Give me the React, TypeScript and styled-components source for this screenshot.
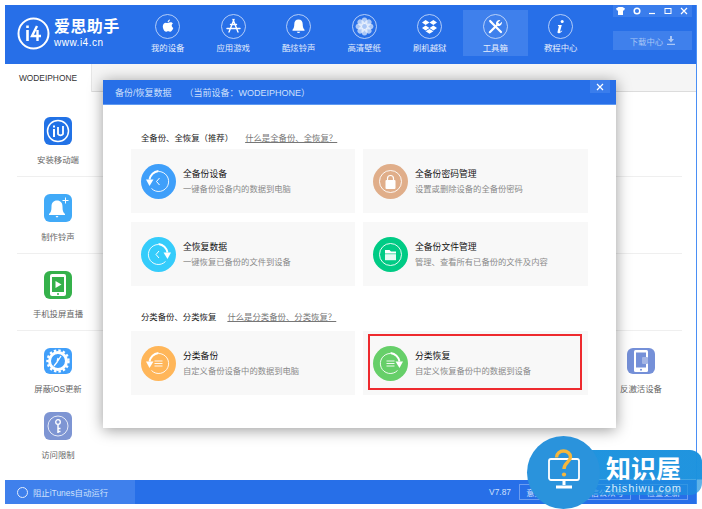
import React from 'react';
import styled, { createGlobalStyle } from 'styled-components';

const GlobalStyle = createGlobalStyle`
  html, body {
    margin: 0;
    padding: 0;
    background: #fff;
    font-family: "Liberation Sans", "Noto Sans CJK SC", sans-serif;
  }
  * { box-sizing: border-box; }
`;

const Page = styled.div`
  position: relative;
  width: 702px;
  height: 509px;
  padding: 5px;
  overflow: hidden;
`;

const Window = styled.div`
  position: relative;
  display: flex;
  flex-direction: column;
  height: 100%;
  border-right: 1px solid #4a8ff5;
`;

const Header = styled.header`
  display: flex;
  flex: none;
  height: 59px;
  background: #276fe8;
  color: #fff;
`;

const Logo = styled.div`
  display: flex;
  width: 130px;
  padding: 12px 0 0 12px;
  gap: 4px;
`;

const LogoText = styled.div`
  display: flex;
  flex-direction: column;
  h1 {
    margin: 0;
    font-size: 16px;
    line-height: 20px;
    font-weight: 700;
    letter-spacing: 0.4px;
  }
  span {
    font-size: 10px;
    line-height: 11px;
    letter-spacing: 0.5px;
  }
`;

const Nav = styled.nav`
  display: flex;
  align-items: flex-start;
`;

const NavItem = styled.div<{ $active?: boolean }>`
  display: flex;
  flex-direction: column;
  align-items: center;
  width: 65.5px;
  height: 46px;
  margin-top: 5px;
  padding-top: 4px;
  font-size: 8.4px;
  line-height: 12px;
  gap: 3px;
  color: #e4edfc;
  background: ${({ $active }) => ($active ? '#3f80ec' : 'transparent')};
`;

const WindowTools = styled.div`
  position: absolute;
  top: 0;
  right: 4px;
  width: 79px;
  display: flex;
  flex-direction: column;
  gap: 14px;
`;

const ControlRow = styled.div`
  display: flex;
  height: 12px;
  background: #3a7dec;
`;

const Control = styled.span`
  display: flex;
  align-items: center;
  justify-content: center;
  flex: 1;
`;

const DownloadButton = styled.div`
  display: flex;
  align-items: center;
  justify-content: center;
  height: 19px;
  gap: 4px;
  font-size: 8.4px;
  color: #a9c6f6;
  background: #3f80ec;
`;

const TabStrip = styled.div`
  display: flex;
  flex: none;
  height: 28px;
  background: #f5f5f5;
  border-bottom: 1px solid #dcdcdc;
`;

const Tab = styled.div`
  display: flex;
  align-items: center;
  justify-content: center;
  width: 87px;
  height: 28px;
  font-size: 8.4px;
  color: #333;
  background: #fff;
  border-right: 1px solid #e6e6e6;
`;

const Content = styled.main`
  flex: 1;
  padding: 8px 14px 0 12px;
  background: #fff;
`;

const ToolRow = styled.div<{ $plain?: boolean; $compact?: boolean }>`
  display: flex;
  justify-content: space-between;
  height: ${({ $compact }) => ($compact ? '64px' : '77px')};
  padding-top: 17px;
  border-bottom: ${({ $plain }) => ($plain ? 'none' : '1px solid #efefef')};
`;

const Tool = styled.div`
  display: flex;
  flex-direction: column;
  align-items: center;
  width: 82px;
  gap: 9px;
  font-size: 8.4px;
  line-height: 12px;
  color: #666;
`;

const ToolIcon = styled.div<{ $color: string }>`
  display: flex;
  align-items: center;
  justify-content: center;
  width: 28px;
  height: 28px;
  border-radius: 6px;
  background: ${({ $color }) => $color};
`;

const Footer = styled.footer`
  display: flex;
  flex: none;
  align-items: center;
  height: 24px;
  background: #276fe8;
  color: #cfe0fb;
  font-size: 8.4px;
`;

const ITunesToggle = styled.div`
  display: flex;
  align-items: center;
  width: 130px;
  height: 100%;
  gap: 5px;
  padding-left: 12px;
  background: #3f80ec;
`;

const Radio = styled.span`
  width: 11px;
  height: 11px;
  border-radius: 50%;
  border: 1px solid #e4edfc;
`;

const FooterRight = styled.div`
  display: flex;
  align-items: center;
  margin-left: auto;
  gap: 8px;
  padding-right: 8px;
`;

const FooterButton = styled.span<{ $width: number }>`
  display: flex;
  align-items: center;
  justify-content: center;
  width: ${({ $width }) => $width}px;
  height: 16px;
  border: 1px solid #6c9df0;
`;

const Modal = styled.section`
  position: absolute;
  left: 98px;
  top: 75px;
  width: 513px;
  height: 348px;
  background: #fff;
  box-shadow: 0 2px 14px rgba(0, 0, 0, 0.4);
`;

const ModalTitle = styled.div`
  position: relative;
  display: flex;
  align-items: center;
  height: 25px;
  padding-left: 12px;
  gap: 13px;
  font-size: 9px;
  color: #cfe0fb;
  background: #276fe8;
  border-bottom: 1px solid #5f9af2;
`;

const ModalClose = styled.span`
  position: absolute;
  top: 0;
  right: 6px;
  display: flex;
  align-items: center;
  justify-content: center;
  width: 20px;
  height: 13px;
  background: #3a7dec;
`;

const ModalBody = styled.div`
  padding: 25px 28px 0;
`;

const SectionHead = styled.div<{ $gap: number; $after: number }>`
  display: flex;
  align-items: center;
  height: 14px;
  padding-left: 10px;
  gap: ${({ $gap }) => $gap}px;
  font-size: 8.4px;
  color: #222;
  margin-bottom: ${({ $after }) => $after}px;
  a {
    color: #777;
    text-decoration: underline;
  }
`;

const CardGrid = styled.div`
  display: grid;
  grid-template-columns: 224px 225px;
  grid-auto-rows: 64px;
  gap: 9px 8px;
  margin-bottom: 23px;
`;

const Card = styled.div`
  position: relative;
  display: flex;
  align-items: center;
  padding-left: 10px;
  gap: 7px;
  background: #f8f8f8;
`;

const CardText = styled.div`
  display: flex;
  flex-direction: column;
  gap: 3px;
  strong {
    font-size: 8.8px;
    line-height: 12px;
    font-weight: 400;
    color: #111;
  }
  span {
    font-size: 8.3px;
    line-height: 12px;
    color: #8a8a8a;
  }
`;

const Highlight = styled.div`
  position: absolute;
  left: 5px;
  top: 3px;
  width: 214px;
  height: 56px;
  border: 2px solid #ee2a2e;
`;

const Watermark = styled.div`
  position: absolute;
  left: 527px;
  top: 436px;
  width: 175px;
  height: 73px;
`;

const WatermarkBar = styled.div`
  position: absolute;
  left: 30px;
  top: 14px;
  width: 145px;
  height: 45px;
  border-radius: 0 12px 12px 0;
  background: linear-gradient(rgba(28, 146, 222, 0.98) 65%, rgba(28, 146, 222, 0.7) 66%);
`;

const WatermarkDisc = styled.div`
  position: absolute;
  left: 0;
  top: 0;
  width: 73px;
  height: 73px;
  padding-bottom: 7px;
  border-radius: 50%;
  background: #2a93dc;
  display: flex;
  align-items: center;
  justify-content: center;
`;

const WatermarkText = styled.div`
  position: absolute;
  left: 77px;
  top: 20px;
  width: 79px;
  color: #fff;
  text-align: center;
  b {
    display: block;
    font-size: 25px;
    line-height: 26px;
    white-space: nowrap;
  }
  span {
    display: block;
    font-size: 11px;
    line-height: 12px;
    letter-spacing: 0.9px;
    white-space: nowrap;
    color: #d7ecfa;
  }
`;

const Ring = ({ children }: { children: React.ReactNode }) => (
  <svg width="25" height="25" viewBox="0 0 25 25" fill="none">
    <circle cx="12.5" cy="12.5" r="12" stroke="#d5e3fb" strokeWidth="0.8" />
    {children}
  </svg>
);

const navItems: { label: string; active?: boolean; icon: React.ReactNode }[] = [
  {
    label: '我的设备',
    icon: (
      <Ring>
        <path d="M12.6 9c1-.1 1.9-.7 2.9-.7 1 0 1.9.5 2.4 1.3-1.8 1-1.5 3.7.4 4.5-.5 1.4-1.6 3.6-2.9 3.6-.8 0-1.2-.5-2.2-.5s-1.5.5-2.2.5c-1.6 0-3.2-3-3.2-5.2 0-2.4 1.5-3.8 3-3.8.8 0 1.4.3 2 .3z" fill="#fff" />
        <path d="M12.6 8.3c0-1.4 1-2.5 2.3-2.7.1 1.4-1 2.6-2.3 2.7z" fill="#fff" />
      </Ring>
    ),
  },
  {
    label: '应用游戏',
    icon: (
      <Ring>
        <path d="M13 5.5 8 18M12 5.5 17 18M6 14.5h13M9.5 10.5l6 0" stroke="#fff" strokeWidth="1.4" strokeLinecap="round" />
      </Ring>
    ),
  },
  {
    label: '酷炫铃声',
    icon: (
      <Ring>
        <path d="M12.5 5.5c-2.8 0-4.2 2-4.2 4.6 0 3-.6 4.4-1.8 5.7v1h12v-1c-1.2-1.3-1.8-2.7-1.8-5.7 0-2.6-1.4-4.6-4.2-4.6z" fill="#fff" />
        <path d="M10.8 17.8a1.8 1.8 0 0 0 3.4 0z" fill="#fff" />
      </Ring>
    ),
  },
  {
    label: '高清壁纸',
    icon: (
      <Ring>
        {[0, 45, 90, 135, 180, 225, 270, 315].map((a) => (
          <ellipse key={a} cx="12.5" cy="7.8" rx="3" ry="4.2" fill="#fff" opacity="0.62" transform={`rotate(${a} 12.5 12.5)`} />
        ))}
        <circle cx="12.5" cy="12.5" r="2.4" fill="#a9c6f6" />
      </Ring>
    ),
  },
  {
    label: '刷机越狱',
    icon: (
      <Ring>
        <path d="m8.6 6 3.9 2.5L8.6 11 5 8.5zM16.4 6 20 8.5 16.4 11l-3.9-2.5zM8.6 11.6l3.9 2.5 3.9-2.5 3.6 2.4-3.6 2.4-3.9-2.4-3.9 2.4L5 14z" fill="#fff" />
        <path d="m8.6 17.2 3.9-2.3 3.9 2.3-3.9 2.5z" fill="#fff" />
      </Ring>
    ),
  },
  {
    label: '工具箱',
    active: true,
    icon: (
      <Ring>
        <path d="m7.5 7.5 10.5 10.5" stroke="#fff" strokeWidth="2.2" strokeLinecap="round" />
        <path d="M6 6.8 7.2 5.8l2.5 2.4-1.4 1.3z" fill="#fff" />
        <path d="m6.8 18.2 7-7" stroke="#fff" strokeWidth="2.2" strokeLinecap="round" />
        <path d="M13 10c-.4-2.3 1.8-4.4 4.3-3.8L15 8.4l1.6 1.6 2.300-2.200c.5 2.500-1.700 4.700-4 4.200z" fill="#fff" />
      </Ring>
    ),
  },
  {
    label: '教程中心',
    icon: (
      <Ring>
        <circle cx="14.2" cy="7.4" r="1.5" fill="#fff" />
        <path d="M10 11h3.800l-1.700 6.200c-.1.500.4.600 1.900-.700l.3.400c-1.400 1.700-2.700 2.300-3.700 2.300-1 0-1.300-.6-1-1.700l1.300-5.200-1-.3z" fill="#fff" />
      </Ring>
    ),
  },
];

// round arrow of the backup cards; the restore cards use it mirrored
const RoundArrow = ({ mirrored }: { mirrored?: boolean }) => (
  <g transform={mirrored ? 'matrix(-1 0 0 1 35 0)' : undefined}>
    <path d="M10.500 24.500A10 10 0 1 0 17.500 7.500" stroke="#fff" strokeWidth="0.9" fill="none" />
    <path d="M17.500 7A11 11 0 0 0 8.500 15.500" stroke="#fff" strokeWidth="1.900" fill="none" />
    <path d="M5 15.500h7.500L8.500 22z" fill="#fff" />
  </g>
);

const Chevron = ({ x }: { x: number }) => (
  <path d={`M${x + 3} 14 ${x} 17.500 ${x + 3} 21`} stroke="#fff" strokeWidth="1" fill="none" />
);

const Lines = () => <path d="M13.500 15h8M13.500 17.500h8M13.500 20h8" stroke="#fff" strokeWidth="0.9" />;

const CardIcon = ({ color, children }: { color: string; children: React.ReactNode }) => (
  <svg width="35" height="35" viewBox="0 0 35 35" style={{ flex: 'none' }}>
    <circle cx="17.500" cy="17.500" r="17.500" fill={color} />
    {children}
  </svg>
);

const InnerRing = () => <circle cx="17.500" cy="17.500" r="11" stroke="#fff" strokeWidth="0.9" fill="none" />;

export default function App() {
  return (
    <Page>
      <GlobalStyle />
      <Window>
        <Header>
          <Logo>
            <svg width="33" height="33" viewBox="0 0 33 33" fill="none">
              <circle cx="16.500" cy="16.500" r="15" stroke="#fff" strokeWidth="2" />
              <path d="M10.500 8.500v2.500M10.500 13v11" stroke="#fff" strokeWidth="2.600" />
              <path d="M20 9l-5 10h9M20.500 13v11" stroke="#fff" strokeWidth="2.400" />
            </svg>
            <LogoText>
              <h1>爱思助手</h1>
              <span>www.i4.cn</span>
            </LogoText>
          </Logo>
          <Nav>
            {navItems.map((item) => (
              <NavItem key={item.label} $active={item.active}>
                {item.icon}
                {item.label}
              </NavItem>
            ))}
          </Nav>
          <WindowTools>
            <ControlRow>
              <Control>
                <svg width="9" height="8" viewBox="0 0 9 8"><path d="M0 1.500 2.500 0h4L9 1.500 8 3.500H7V8H2V3.500H1z" fill="#fff" /></svg>
              </Control>
              <Control>
                <svg width="8" height="8" viewBox="0 0 8 8" fill="none"><circle cx="4" cy="4" r="2.800" stroke="#fff" strokeWidth="1.500" /></svg>
              </Control>
              <Control>
                <svg width="8" height="8" viewBox="0 0 8 8"><path d="M1 6.500h6" stroke="#fff" strokeWidth="1.200" /></svg>
              </Control>
              <Control>
                <svg width="8" height="8" viewBox="0 0 8 8" fill="none"><rect x="1" y="1.500" width="6" height="5" stroke="#fff" /></svg>
              </Control>
              <Control>
                <svg width="8" height="8" viewBox="0 0 8 8"><path d="m1 1 6 6M7 1 1 7" stroke="#fff" strokeWidth="1.200" /></svg>
              </Control>
            </ControlRow>
            <DownloadButton>
              下载中心
              <svg width="8" height="9" viewBox="0 0 8 9" fill="#a9c6f6"><path d="M3 0h2v3h2L4 6.500 1 3h2zM0 7.800h8V9H0z" /></svg>
            </DownloadButton>
          </WindowTools>
        </Header>
        <TabStrip>
          <Tab>WODEIPHONE</Tab>
        </TabStrip>
        <Content>
          <ToolRow>
            <Tool>
              <ToolIcon $color="#2272e6">
                <svg width="24" height="24" viewBox="0 0 24 24" fill="none">
                  <circle cx="12" cy="12" r="10.500" stroke="#fff" strokeWidth="1.500" />
                  <path d="M8 6.500v2M8 10v8" stroke="#fff" strokeWidth="2" />
                  <path d="M12 8v7a3 3 0 0 0 5 0V7" stroke="#fff" strokeWidth="1.800" />
                </svg>
              </ToolIcon>
              安装移动端
            </Tool>
          </ToolRow>
          <ToolRow>
            <Tool>
              <ToolIcon $color="#41aaf8">
                <svg width="24" height="24" viewBox="0 0 24 24" fill="#fff">
                  <path d="M11 4.500c-3.500 0-5.500 2.500-5.500 6 0 4-.6 6-2.500 7.500v1h16v-1c-1.900-1.500-2.500-3.500-2.500-7.500 0-3.500-2-6-5.500-6z" />
                  <path d="M9.500 20h3l-1.500 1.800z" />
                  <path d="M19 1.500h1v2.500h2.500v1H20v2.500h-1V5h-2.500V4H19z" />
                </svg>
              </ToolIcon>
              制作铃声
            </Tool>
          </ToolRow>
          <ToolRow>
            <Tool>
              <ToolIcon $color="#35b14b">
                <svg width="20" height="24" viewBox="0 0 20 24">
                  <rect x="2" y="1" width="16" height="22" rx="2" fill="#fff" />
                  <rect x="4" y="4" width="12" height="15" fill="#35b14b" />
                  <path d="m7.500 8 6 3.500-6 3.500z" fill="#fff" />
                  <circle cx="10" cy="21" r="1" fill="#35b14b" />
                </svg>
              </ToolIcon>
              手机投屏直播
            </Tool>
          </ToolRow>
          <ToolRow $plain $compact>
            <Tool>
              <ToolIcon $color="#419ffa">
                <svg width="24" height="24" viewBox="0 0 24 24" fill="none">
                  <circle cx="12" cy="12" r="8.500" stroke="#fff" strokeWidth="3" />
                  <circle cx="12" cy="12" r="10.500" stroke="#fff" strokeWidth="2.400" strokeDasharray="2.400 2.100" />
                  <path d="m15 7-3.500 5.500M11.500 12.500 8 17M12 9l-1 4" stroke="#fff" strokeWidth="1.300" />
                </svg>
              </ToolIcon>
              屏蔽iOS更新
            </Tool>
            <Tool>
              <ToolIcon $color="#7590d8">
                <svg width="20" height="24" viewBox="0 0 20 24">
                  <rect x="3" y="1" width="14" height="22" rx="1.500" fill="#fff" />
                  <rect x="5" y="3.500" width="10" height="15" fill="#7590d8" />
                  <rect x="11" y="8" width="6" height="7" rx="1" fill="#a5b6e5" />
                  <circle cx="10" cy="20.800" r="1" fill="#7590d8" />
                </svg>
              </ToolIcon>
              反激活设备
            </Tool>
          </ToolRow>
          <ToolRow $plain>
            <Tool>
              <ToolIcon $color="#7e95d3">
                <svg width="24" height="24" viewBox="0 0 24 24" fill="none" stroke="#fff">
                  <circle cx="12" cy="12" r="10" strokeWidth="0.800" />
                  <circle cx="12" cy="8" r="2.300" strokeWidth="1.300" />
                  <path d="M12 10.500V19M12 14.500h2.500M12 17.500h2.500" strokeWidth="1.500" />
                </svg>
              </ToolIcon>
              访问限制
            </Tool>
          </ToolRow>
        </Content>
        <Footer>
          <ITunesToggle>
            <Radio />
            阻止iTunes自动运行
          </ITunesToggle>
          <FooterRight>
            <span>V7.87</span>
            <FooterButton $width={48}>意见反馈</FooterButton>
            <FooterButton $width={56}>微信公众号</FooterButton>
            <FooterButton $width={49}>检查更新</FooterButton>
          </FooterRight>
        </Footer>
        <Modal>
          <ModalTitle>
            <span>备份/恢复数据</span>
            <span>（当前设备：WODEIPHONE）</span>
            <ModalClose>
              <svg width="8" height="8" viewBox="0 0 8 8"><path d="m1 1 6 6M7 1 1 7" stroke="#fff" strokeWidth="1.200" /></svg>
            </ModalClose>
          </ModalTitle>
          <ModalBody>
            <SectionHead $gap={12} $after={5}>
              <span>全备份、全恢复（推荐）</span>
              <a>什么是全备份、全恢复？</a>
            </SectionHead>
            <CardGrid>
              <Card>
                <CardIcon color="#3f9ffa">
                  <RoundArrow />
                  <Chevron x={15.500} />
                </CardIcon>
                <CardText>
                  <strong>全备份设备</strong>
                  <span>一键备份设备内的数据到电脑</span>
                </CardText>
              </Card>
              <Card>
                <CardIcon color="#e0ae8a">
                  <InnerRing />
                  <rect x="12.500" y="16" width="10" height="9" rx="1" fill="#fff" />
                  <path d="M14.500 16.500v-2a3 3 0 0 1 6 0v2" stroke="#fff" strokeWidth="1.200" fill="none" />
                </CardIcon>
                <CardText>
                  <strong>全备份密码管理</strong>
                  <span>设置或删除设备的全备份密码</span>
                </CardText>
              </Card>
              <Card>
                <CardIcon color="#35ccfb">
                  <RoundArrow mirrored />
                  <Chevron x={15} />
                </CardIcon>
                <CardText>
                  <strong>全恢复数据</strong>
                  <span>一键恢复已备份的文件到设备</span>
                </CardText>
              </Card>
              <Card>
                <CardIcon color="#00cb85">
                  <InnerRing />
                  <path d="M12 13h4.500l1.500 1.500h5v2H12z" fill="#fff" />
                  <rect x="12" y="17.200" width="11" height="6" fill="#fff" opacity="0.9" />
                </CardIcon>
                <CardText>
                  <strong>全备份文件管理</strong>
                  <span>管理、查看所有已备份的文件及内容</span>
                </CardText>
              </Card>
            </CardGrid>
            <SectionHead $gap={11} $after={8}>
              <span>分类备份、分类恢复</span>
              <a>什么是分类备份、分类恢复？</a>
            </SectionHead>
            <CardGrid>
              <Card>
                <CardIcon color="#ffb659">
                  <RoundArrow />
                  <Lines />
                </CardIcon>
                <CardText>
                  <strong>分类备份</strong>
                  <span>自定义备份设备中的数据到电脑</span>
                </CardText>
              </Card>
              <Card>
                <CardIcon color="#66cf69">
                  <RoundArrow mirrored />
                  <Lines />
                </CardIcon>
                <CardText>
                  <strong>分类恢复</strong>
                  <span>自定义恢复备份中的数据到设备</span>
                </CardText>
                <Highlight />
              </Card>
            </CardGrid>
          </ModalBody>
        </Modal>
      </Window>
      <Watermark>
        <WatermarkBar />
        <WatermarkDisc>
          <svg width="32" height="40" viewBox="0 0 32 40" fill="none">
            <rect x="1" y="10" width="30" height="21" rx="2" stroke="#fff" strokeWidth="1.800" />
            <path d="M16 31v5M8 38h16" stroke="#fff" strokeWidth="3" />
            <path d="M8.500 8.500C8.500 4.500 12 2 15.500 2S22.500 4.500 22.500 8C22.500 13 16 13.500 16 20" stroke="#f6b73c" strokeWidth="3.400" />
            <circle cx="16" cy="25.500" r="2.100" fill="#f6b73c" />
          </svg>
        </WatermarkDisc>
        <WatermarkText>
          <b>知识屋</b>
          <span>zhishiwu.com</span>
        </WatermarkText>
      </Watermark>
    </Page>
  );
}
